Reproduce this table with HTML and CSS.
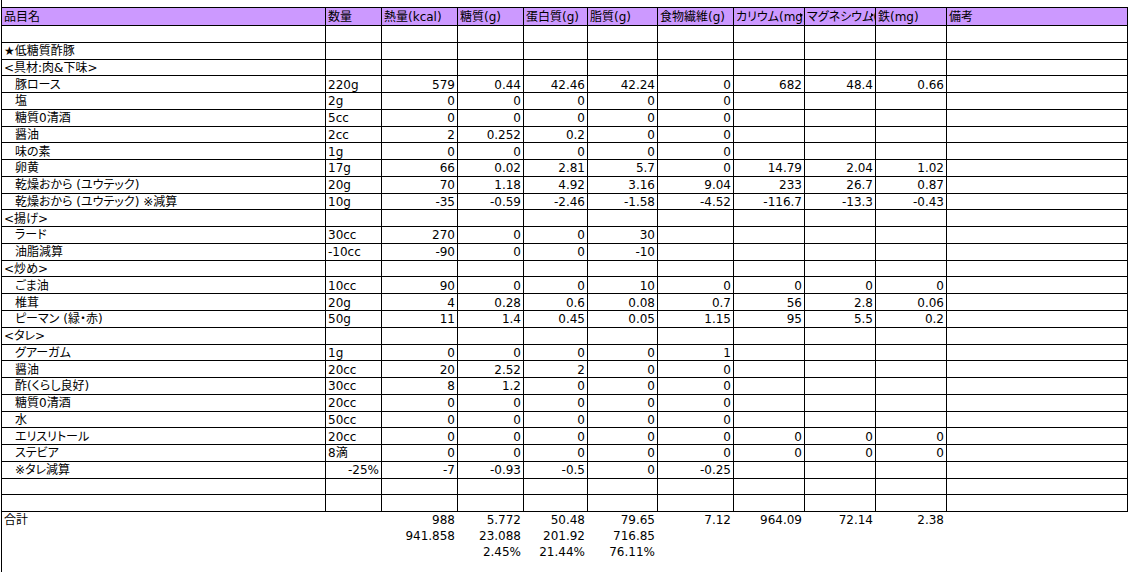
FILE: index.html
```html
<!DOCTYPE html>
<html lang="ja">
<head>
<meta charset="utf-8">
<title>低糖質酢豚</title>
<link rel="stylesheet" href="styles.css">
</head>
<body>
<div class="sheet">
  <div class="grid">
    <div class="row hd"><div>品目名</div><div>数量</div><div>熱量(kcal)</div><div>糖質(g)</div><div>蛋白質(g)</div><div>脂質(g)</div><div>食物繊維(g)</div><div class="trunc">カリウム(mg)</div><div class="trunc">マグネシウム(mg)</div><div>鉄(mg)</div><div>備考</div></div>
    <div class="row"><div></div><div></div><div></div><div></div><div></div><div></div><div></div><div></div><div></div><div></div><div></div></div>
    <div class="row"><div>★低糖質酢豚</div><div></div><div></div><div></div><div></div><div></div><div></div><div></div><div></div><div></div><div></div></div>
    <div class="row"><div>&lt;具材:肉&amp;下味&gt;</div><div></div><div></div><div></div><div></div><div></div><div></div><div></div><div></div><div></div><div></div></div>
    <div class="row"><div class="i">豚ロース</div><div>220g</div><div>579</div><div>0.44</div><div>42.46</div><div>42.24</div><div>0</div><div>682</div><div>48.4</div><div>0.66</div><div></div></div>
    <div class="row"><div class="i">塩</div><div>2g</div><div>0</div><div>0</div><div>0</div><div>0</div><div>0</div><div></div><div></div><div></div><div></div></div>
    <div class="row"><div class="i">糖質0清酒</div><div>5cc</div><div>0</div><div>0</div><div>0</div><div>0</div><div>0</div><div></div><div></div><div></div><div></div></div>
    <div class="row"><div class="i">醤油</div><div>2cc</div><div>2</div><div>0.252</div><div>0.2</div><div>0</div><div>0</div><div></div><div></div><div></div><div></div></div>
    <div class="row"><div class="i">味の素</div><div>1g</div><div>0</div><div>0</div><div>0</div><div>0</div><div>0</div><div></div><div></div><div></div><div></div></div>
    <div class="row"><div class="i">卵黄</div><div>17g</div><div>66</div><div>0.02</div><div>2.81</div><div>5.7</div><div>0</div><div>14.79</div><div>2.04</div><div>1.02</div><div></div></div>
    <div class="row"><div class="i">乾燥おから (ユウテック)</div><div>20g</div><div>70</div><div>1.18</div><div>4.92</div><div>3.16</div><div>9.04</div><div>233</div><div>26.7</div><div>0.87</div><div></div></div>
    <div class="row"><div class="i">乾燥おから (ユウテック) ※減算</div><div>10g</div><div>-35</div><div>-0.59</div><div>-2.46</div><div>-1.58</div><div>-4.52</div><div>-116.7</div><div>-13.3</div><div>-0.43</div><div></div></div>
    <div class="row"><div>&lt;揚げ&gt;</div><div></div><div></div><div></div><div></div><div></div><div></div><div></div><div></div><div></div><div></div></div>
    <div class="row"><div class="i">ラード</div><div>30cc</div><div>270</div><div>0</div><div>0</div><div>30</div><div></div><div></div><div></div><div></div><div></div></div>
    <div class="row"><div class="i">油脂減算</div><div>-10cc</div><div>-90</div><div>0</div><div>0</div><div>-10</div><div></div><div></div><div></div><div></div><div></div></div>
    <div class="row"><div>&lt;炒め&gt;</div><div></div><div></div><div></div><div></div><div></div><div></div><div></div><div></div><div></div><div></div></div>
    <div class="row"><div class="i">ごま油</div><div>10cc</div><div>90</div><div>0</div><div>0</div><div>10</div><div>0</div><div>0</div><div>0</div><div>0</div><div></div></div>
    <div class="row"><div class="i">椎茸</div><div>20g</div><div>4</div><div>0.28</div><div>0.6</div><div>0.08</div><div>0.7</div><div>56</div><div>2.8</div><div>0.06</div><div></div></div>
    <div class="row"><div class="i">ピーマン (緑・赤)</div><div>50g</div><div>11</div><div>1.4</div><div>0.45</div><div>0.05</div><div>1.15</div><div>95</div><div>5.5</div><div>0.2</div><div></div></div>
    <div class="row"><div>&lt;タレ&gt;</div><div></div><div></div><div></div><div></div><div></div><div></div><div></div><div></div><div></div><div></div></div>
    <div class="row"><div class="i">グアーガム</div><div>1g</div><div>0</div><div>0</div><div>0</div><div>0</div><div>1</div><div></div><div></div><div></div><div></div></div>
    <div class="row"><div class="i">醤油</div><div>20cc</div><div>20</div><div>2.52</div><div>2</div><div>0</div><div>0</div><div></div><div></div><div></div><div></div></div>
    <div class="row"><div class="i">酢(くらし良好)</div><div>30cc</div><div>8</div><div>1.2</div><div>0</div><div>0</div><div>0</div><div></div><div></div><div></div><div></div></div>
    <div class="row"><div class="i">糖質0清酒</div><div>20cc</div><div>0</div><div>0</div><div>0</div><div>0</div><div>0</div><div></div><div></div><div></div><div></div></div>
    <div class="row"><div class="i">水</div><div>50cc</div><div>0</div><div>0</div><div>0</div><div>0</div><div>0</div><div></div><div></div><div></div><div></div></div>
    <div class="row"><div class="i">エリスリトール</div><div>20cc</div><div>0</div><div>0</div><div>0</div><div>0</div><div>0</div><div>0</div><div>0</div><div>0</div><div></div></div>
    <div class="row"><div class="i">ステビア</div><div>8滴</div><div>0</div><div>0</div><div>0</div><div>0</div><div>0</div><div>0</div><div>0</div><div>0</div><div></div></div>
    <div class="row"><div class="i">※タレ減算</div><div class="n">-25%</div><div>-7</div><div>-0.93</div><div>-0.5</div><div>0</div><div>-0.25</div><div></div><div></div><div></div><div></div></div>
    <div class="row"><div></div><div></div><div></div><div></div><div></div><div></div><div></div><div></div><div></div><div></div><div></div></div>
    <div class="row"><div></div><div></div><div></div><div></div><div></div><div></div><div></div><div></div><div></div><div></div><div></div></div>
  </div>
  <div class="totals">
    <div class="row"><div>合計</div><div></div><div>988</div><div>5.772</div><div>50.48</div><div>79.65</div><div>7.12</div><div>964.09</div><div>72.14</div><div>2.38</div><div></div></div>
    <div class="row"><div></div><div></div><div>941.858</div><div>23.088</div><div>201.92</div><div>716.85</div><div></div><div></div><div></div><div></div><div></div></div>
    <div class="row"><div></div><div></div><div></div><div>2.45%</div><div>21.44%</div><div>76.11%</div><div></div><div></div><div></div><div></div><div></div></div>
  </div>
</div>
</body>
</html>
```

FILE: styles.css
```css
html, body {
  margin: 0;
  padding: 0;
  background: #ffffff;
}

body {
  font-family: "DejaVu Sans", "Noto Sans CJK JP", sans-serif;
  font-size: 12px;
  color: #000000;
  font-feature-settings: "palt";
}

.sheet {
  margin-left: 1px;
  border-left: 1px solid #000000;
  height: 572px;
  padding-top: 7px;
  box-sizing: border-box;
  overflow: hidden;
}

.grid {
  width: 1126px;
  border-top: 1px solid #000000;
}

.row {
  display: grid;
  grid-template-columns: 324px 56px 76px 66px 64px 70px 76px 71px 71px 71px 181px;
  height: 16.78px;
}

.row > div {
  display: flex;
  align-items: flex-end;
  justify-content: flex-start;
  box-sizing: border-box;
  padding: 0 2px 0.5px 2px;
  line-height: 14px;
  white-space: nowrap;
  overflow: hidden;
  border-right: 1px solid #000000;
  border-bottom: 1px solid #000000;
}

.row > div:nth-child(n+3):nth-child(-n+10) {
  justify-content: flex-end;
}

.row > .n {
  justify-content: flex-end;
}

.row > .i {
  padding-left: 13px;
}

.row.hd {
  height: 18px;
  background: #cc99ff;
}

.row.hd > div:nth-child(n) {
  justify-content: flex-start;
  padding-bottom: 1px;
}

.row.hd > .trunc {
  position: relative;
  padding-right: 5px;
}

.row.hd > .trunc::after {
  content: "";
  position: absolute;
  right: 1px;
  top: 5px;
  width: 0;
  height: 0;
  border-left: 3px solid #000000;
  border-top: 2.5px solid transparent;
  border-bottom: 2.5px solid transparent;
}

.totals .row {
  height: 16px;
}

.totals .row > div {
  border-right-color: transparent;
  border-bottom-color: transparent;
}
```
